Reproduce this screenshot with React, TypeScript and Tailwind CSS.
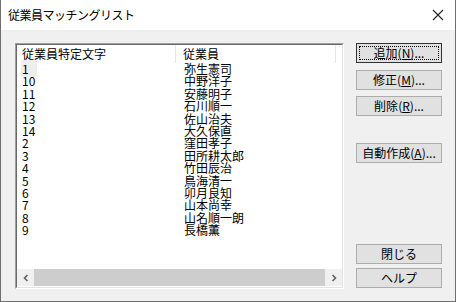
import React from "react";

const rows = [
  ["1", "弥生憲司"],
  ["10", "中野洋子"],
  ["11", "安藤明子"],
  ["12", "石川順一"],
  ["13", "佐山治夫"],
  ["14", "大久保直"],
  ["2", "窪田孝子"],
  ["3", "田所耕太郎"],
  ["4", "竹田辰治"],
  ["5", "鳥海清一"],
  ["6", "卯月良知"],
  ["7", "山本尚幸"],
  ["8", "山名順一朗"],
  ["9", "長橋薫"],
];

const font = { fontFamily: '"Noto Sans CJK JP", "Liberation Sans", sans-serif' };

function Btn({ label, k, rest, mt, isDefault }: { label: string; k: string; rest?: string; mt: string; isDefault?: boolean }) {
  return (
    <div
      className={`${mt} h-[20px] w-[86px] flex items-center justify-center bg-[#e1e1e1] text-[12px] text-black leading-none ${
        isDefault ? "border border-[#333] p-[2px]" : "border border-[#adadad]"
      }`}
    >
      {isDefault ? (
        <div className="w-full h-full border border-dotted border-black flex items-center justify-center">
          {label}(<span className="underline">{k}</span>){rest}
        </div>
      ) : (
        <span>
          {label}
          {k && (
            <>
              (<span className="underline">{k}</span>)
            </>
          )}
          {rest}
        </span>
      )}
    </div>
  );
}

export default function App() {
  return (
    <div className="w-[456px] h-[302px] bg-[#f0f0f0] border-r border-b border-l border-[#6e6e6e] flex flex-col" style={font}>
      {/* Title bar */}
      <div className="h-[30px] bg-white flex items-center justify-between pl-[7px] pr-[10px] shrink-0">
        <span className="text-[12px] text-black tracking-[-0.5px]">従業員マッチングリスト</span>
        <svg width="12" height="12" viewBox="0 0 12 12" className="mr-[1px]">
          <path d="M1 1 L11 11 M11 1 L1 11" stroke="#222" strokeWidth="1.1" />
        </svg>
      </div>

      {/* Body */}
      <div className="flex pl-[14px] pt-[13px]">
        {/* List view */}
        <div className="w-[329px] h-[246px] border-t border-l border-[#a0a0a0] border-r border-b border-r-white border-b-white">
          <div className="w-full h-full border-t border-l border-[#696969] border-r border-b border-r-[#e3e3e3] border-b-[#e3e3e3] bg-white flex flex-col text-[12px] text-black">
            <div className="flex h-[18px] items-center shrink-0">
              <div className="w-[159px] h-full pl-[5px] border-r border-[#e5e5e5] flex items-center">従業員特定文字</div>
              <div className="flex-1 h-full pl-[7px] border-r border-[#e5e5e5] flex items-center">従業員</div>
              <div className="w-[6px]" />
            </div>
            <div className="flex-1 flex flex-col">
              {rows.map(([id, name], i) => (
                <div key={id} className="flex h-[12.4px] leading-[12.4px]">
                  <div className="w-[159px] pl-[4px]">
                    <span className={i === 0 ? "bg-[#eeeeee] pl-[1px] pr-[8px]" : "pl-[1px]"}>{id}</span>
                  </div>
                  <div className="flex-1 pl-[8px]">{name}</div>
                </div>
              ))}
            </div>
            {/* Horizontal scrollbar */}
            <div className="h-[17px] flex bg-[#f0f0f0] shrink-0 mb-[1px]">
              <div className="w-[17px] flex items-center justify-center">
                <svg width="8" height="8" viewBox="0 0 8 8">
                  <path d="M5.5 1 L2.5 4 L5.5 7" stroke="#606060" strokeWidth="1.6" fill="none" />
                </svg>
              </div>
              <div className="flex-1 bg-[#cdcdcd] my-[0px]" />
              <div className="w-[17px] flex items-center justify-center">
                <svg width="8" height="8" viewBox="0 0 8 8">
                  <path d="M2.5 1 L5.5 4 L2.5 7" stroke="#606060" strokeWidth="1.6" fill="none" />
                </svg>
              </div>
            </div>
          </div>
        </div>

        {/* Buttons */}
        <div className="ml-[12px] flex flex-col">
          <Btn label="追加" k="N" rest="..." mt="mt-0" isDefault />
          <Btn label="修正" k="M" rest="..." mt="mt-[7px]" />
          <Btn label="削除" k="R" rest="..." mt="mt-[6px]" />
          <Btn label="自動作成" k="A" rest="..." mt="mt-[27px]" />
          <Btn label="閉じる" k="" mt="mt-[81px]" />
          <Btn label="ヘルプ" k="" mt="mt-[4px]" />
        </div>
      </div>
    </div>
  );
}
